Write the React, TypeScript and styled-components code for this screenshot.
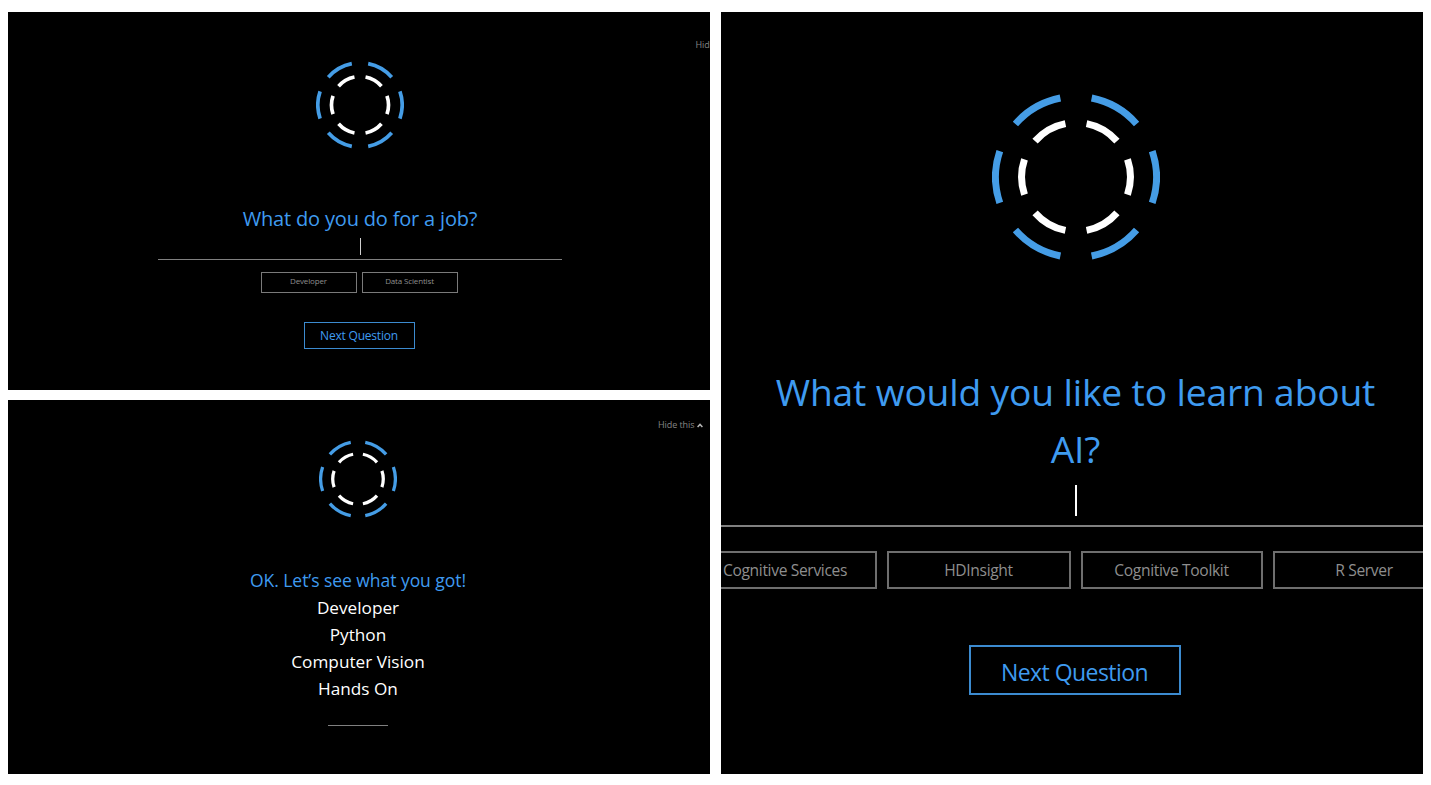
import React from "react";
import styled, { createGlobalStyle } from "styled-components";

const BLUE = "#3f9bf0";
const GRAY = "#808080";

const GlobalStyle = createGlobalStyle`
  * { box-sizing: border-box; }
  body {
    margin: 0;
    background: #fff;
    font-family: "Open Sans", "Noto Sans", sans-serif;
  }
`;

const Page = styled.main`
  display: grid;
  grid-template-columns: 702px 702px;
  column-gap: 11px;
  width: 1431px;
  height: 785px;
  padding: 12px 8px 11px;
  overflow: hidden;
`;

const LeftColumn = styled.div`
  display: grid;
  grid-template-rows: 378px 374px;
  row-gap: 10px;
`;

const Panel = styled.section<{ $top: number; $left?: number; $right?: number }>`
  position: relative;
  display: flex;
  flex-direction: column;
  align-items: center;
  height: 100%;
  padding: ${(p) => p.$top}px ${(p) => p.$right ?? 0}px 0 ${(p) => p.$left ?? 0}px;
  background: #000;
  overflow: hidden;
`;

const RightPanel = styled(Panel)`
  height: 762px;
`;

const LogoSvg = styled.svg`
  display: block;
  flex: none;
  fill: none;
`;

const Title = styled.h1<{ $size: number; $line: number; $gap: number; $spacing?: number }>`
  flex: none;
  margin: ${(p) => p.$gap}px 0 0;
  color: ${BLUE};
  font-size: ${(p) => p.$size}px;
  line-height: ${(p) => p.$line}px;
  font-weight: 400;
  letter-spacing: ${(p) => p.$spacing ?? 0}px;
  text-align: center;
  white-space: nowrap;
`;

const Caret = styled.span<{ $gap: number; $height: number; $width: number; $color: string }>`
  flex: none;
  width: ${(p) => p.$width}px;
  height: ${(p) => p.$height}px;
  margin: ${(p) => p.$gap}px 0 0 1px;
  background: ${(p) => p.$color};
`;

const Rule = styled.div<{ $gap: number; $width: number; $weight?: number }>`
  flex: none;
  width: ${(p) => p.$width}px;
  height: ${(p) => p.$weight ?? 1}px;
  margin-top: ${(p) => p.$gap}px;
  background: ${GRAY};
`;

const Chips = styled.div<{ $gap: number; $between: number }>`
  display: flex;
  flex: none;
  gap: ${(p) => p.$between}px;
  margin: ${(p) => p.$gap}px 2px 0 0;
`;

const Chip = styled.button<{ $large?: boolean; $width: number }>`
  display: flex;
  flex: none;
  align-items: center;
  justify-content: center;
  width: ${(p) => p.$width}px;
  height: ${(p) => (p.$large ? 38 : 21)}px;
  padding: ${(p) => (p.$large ? 0 : "0 0 2px")};
  border: ${(p) => (p.$large ? "2px solid #6e6e6e" : "1px solid #7a7a7a")};
  background: transparent;
  color: #8e8e8e;
  font-family: inherit;
  font-size: ${(p) => (p.$large ? 15.6 : 8)}px;
  line-height: 1.3;
  letter-spacing: ${(p) => (p.$large ? -0.35 : -0.15)}px;
  white-space: nowrap;
`;

const NextButton = styled.button<{ $large?: boolean; $gap: number }>`
  display: flex;
  flex: none;
  align-items: center;
  justify-content: center;
  width: ${(p) => (p.$large ? 212 : 111)}px;
  height: ${(p) => (p.$large ? 50 : 27)}px;
  margin: ${(p) => p.$gap}px 2px 0 0;
  padding: ${(p) => (p.$large ? "5px 0 0" : "0")};
  border: ${(p) => (p.$large ? 2 : 1)}px solid #3c8bd0;
  background: transparent;
  color: ${BLUE};
  font-family: inherit;
  font-size: ${(p) => (p.$large ? 23 : 12)}px;
  line-height: 1;
  letter-spacing: ${(p) => (p.$large ? -0.55 : -0.2)}px;
  white-space: nowrap;
`;

const Answers = styled.ul`
  margin: 0;
  padding: 0;
  list-style: none;
  color: #fff;
  font-size: 17.2px;
  line-height: 27.1px;
  text-align: center;
`;

const HideLink = styled.a<{ $left: number; $top: number }>`
  position: absolute;
  left: ${(p) => p.$left}px;
  top: ${(p) => p.$top}px;
  display: flex;
  align-items: center;
  gap: 3px;
  color: #858585;
  font-size: 9px;
  line-height: 12px;
  letter-spacing: -0.08px;
  white-space: nowrap;
`;

const SEGMENTS = [0, 60, 120, 180, 240, 300];

function arc(radius: number) {
  const half = (18.8 * Math.PI) / 180;
  const x = radius * Math.cos(half);
  const y = radius * Math.sin(half);
  return `M${x} ${-y}A${radius} ${radius} 0 0 1 ${x} ${y}`;
}

function Logo({ size }: { size: number }) {
  return (
    <LogoSvg width={size} height={size} viewBox="-84 -84 168 168" strokeWidth={7}>
      {SEGMENTS.map((angle) => (
        <g key={angle} transform={`rotate(${angle})`}>
          <path d={arc(80.5)} stroke="#459de6" />
          <path d={arc(54.4)} stroke="#fff" />
        </g>
      ))}
    </LogoSvg>
  );
}

function Hide({ left, top }: { left: number; top: number }) {
  return (
    <HideLink $left={left} $top={top}>
      Hide this
      <svg width="6" height="5" viewBox="0 0 6 5" fill="none" stroke="#b5b5b5" strokeWidth="1.5">
        <path d="M0.6 4L3 1.4L5.4 4" />
      </svg>
    </HideLink>
  );
}

export default function App() {
  return (
    <>
      <GlobalStyle />
      <Page>
        <LeftColumn>
          <Panel $top={49} $left={2}>
            <Hide left={687.5} top={27} />
            <Logo size={88} />
            <Title $size={20} $line={30} $gap={55} $spacing={-0.18}>
              What do you do for a job?
            </Title>
            <Caret $gap={4} $height={17} $width={1} $color="#d0d0d0" />
            <Rule $gap={4} $width={404} />
            <Chips $gap={12} $between={5}>
              <Chip $width={96}>Developer</Chip>
              <Chip $width={96}>Data Scientist</Chip>
            </Chips>
            <NextButton $gap={29}>Next Question</NextButton>
          </Panel>
          <Panel $top={40} $right={2}>
            <Hide left={650} top={19} />
            <Logo size={78} />
            <Title $size={17.5} $line={27.1} $gap={48.5} $spacing={-0.05}>
              OK. Let’s see what you got!
            </Title>
            <Answers>
              <li>Developer</li>
              <li>Python</li>
              <li>Computer Vision</li>
              <li>Hands On</li>
            </Answers>
            <Rule $gap={23} $width={60} />
          </Panel>
        </LeftColumn>
        <RightPanel $top={80.5} $left={7}>
          <Logo size={168} />
          <Title $size={37.2} $line={57} $gap={102.7} $spacing={-0.15}>
            What would you like to learn about
            <br />
            AI?
          </Title>
          <Caret $gap={8.3} $height={31} $width={2} $color="#fff" />
          <Rule $gap={8.5} $width={810} $weight={2} />
          <Chips $gap={24} $between={10}>
            <Chip $large $width={183}>Cognitive Services</Chip>
            <Chip $large $width={184}>HDInsight</Chip>
            <Chip $large $width={182}>Cognitive Toolkit</Chip>
            <Chip $large $width={183}>R Server</Chip>
          </Chips>
          <NextButton $large $gap={56}>Next Question</NextButton>
        </RightPanel>
      </Page>
    </>
  );
}
